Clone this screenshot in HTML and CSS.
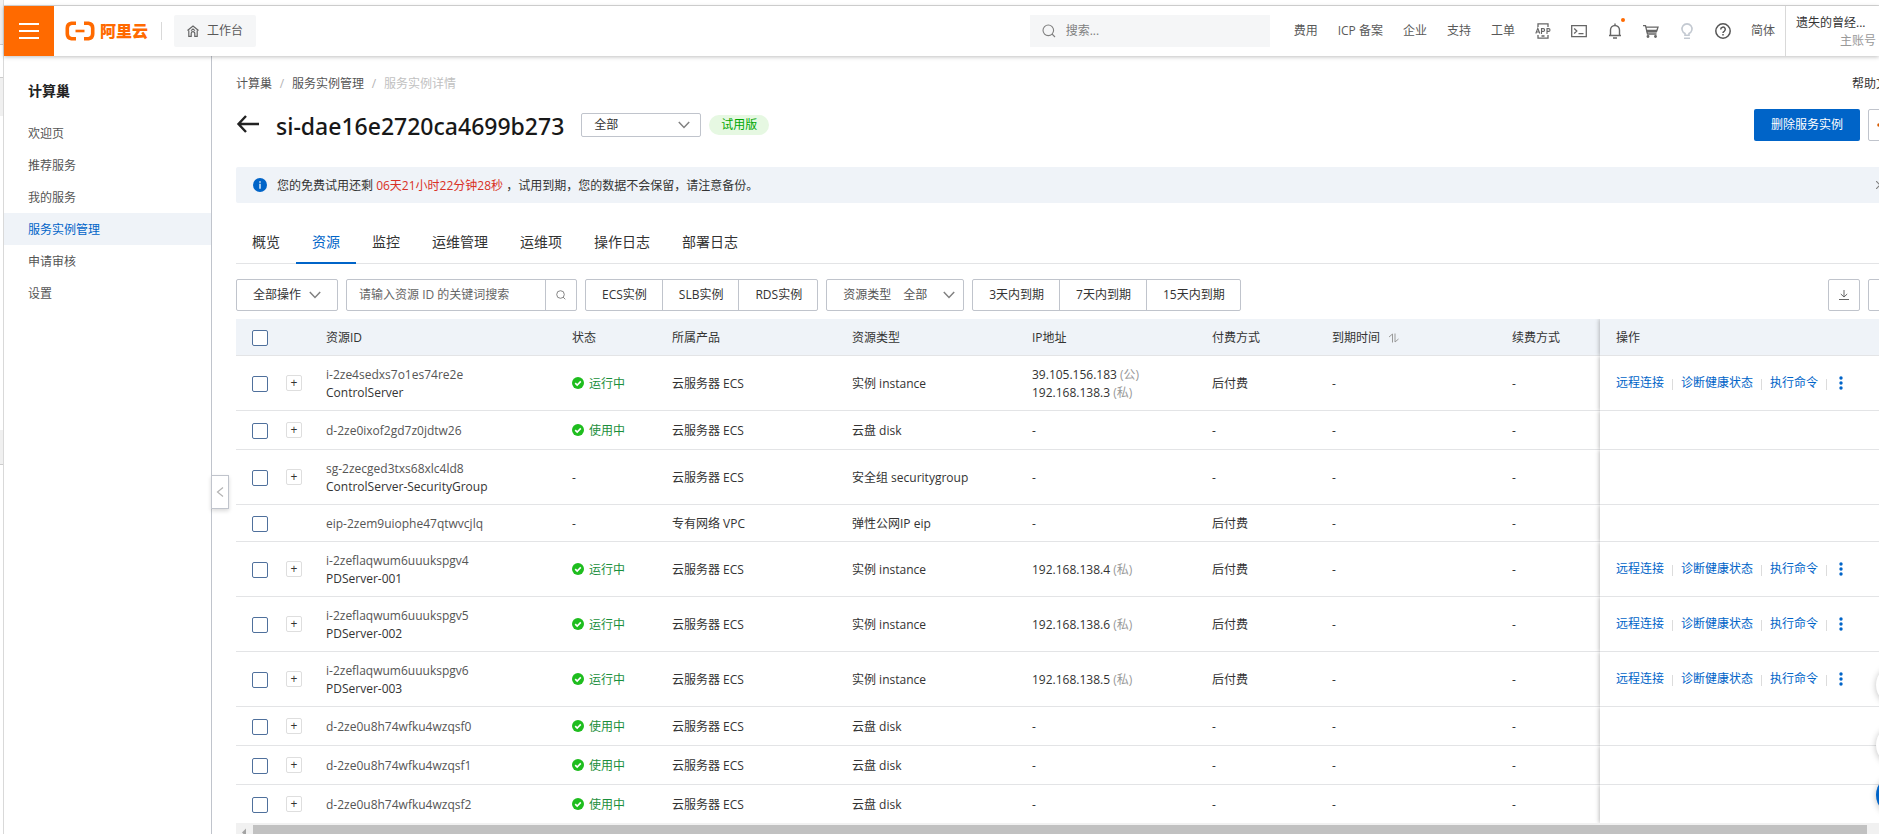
FILE: index.html
```html
<!DOCTYPE html>
<html lang="zh-CN">
<head>
<meta charset="utf-8">
<title>计算巢 - 服务实例详情</title>
<link rel="stylesheet" href="styles.css">
</head>
<body>
<svg class="defs" aria-hidden="true">
  <symbol id="ok" viewBox="0 0 12 12"><circle cx="6" cy="6" r="6" fill="#1ebd1e"/><path d="M3.2 6.1l2 2 3.6-3.7" fill="none" stroke="#fff" stroke-width="1.6"/></symbol>
  <symbol id="down" viewBox="0 0 12 8"><path d="M.8 1l5.2 5.4L11.2 1" fill="none" stroke="#808080" stroke-width="1.5"/></symbol>
  <symbol id="more" viewBox="0 0 4 14"><circle cx="2" cy="2" r="1.7" fill="#0064c8"/><circle cx="2" cy="7" r="1.7" fill="#0064c8"/><circle cx="2" cy="12" r="1.7" fill="#0064c8"/></symbol>
  <symbol id="lens" viewBox="0 0 14 14"><circle cx="6.3" cy="6.3" r="5.3" fill="none" stroke="currentColor" stroke-width="1.1"/><path d="M10 10l3 3" stroke="currentColor" stroke-width="1.1"/></symbol>
</svg>
<div class="page">
  <div class="edge"><i class="e1"></i><i class="e2"></i><i class="e3"></i><i class="e4"></i></div>
  <div class="app">
    <header class="top">
      <button class="burger" aria-label="菜单"><span></span><span></span><span></span></button>
      <a class="logo" href="#">
        <svg width="30" height="20" viewBox="0 0 30 20" fill="none" stroke="#ff6a00"><path d="M11 2.3H6.500Q2.300 3 2.300 7v6q0 4 4.200 4.700H11" stroke-width="3.600"/><path d="M19 2.300h4.500Q27.700 3 27.700 7v6q0 4-4.200 4.700H19" stroke-width="3.600"/><path d="M10.500 10h9" stroke-width="2.600"/></svg>
        <span>阿里云</span>
      </a>
      <i class="bar"></i>
      <a class="bench" href="#">
        <svg width="12" height="12" viewBox="0 0 12 12" fill="none" stroke="#666" stroke-width="1.2"><path d="M.5 5.500L6 1l5.500 4.500M1.800 5.500v5.800h2.400V8.500a1.800 1.800 0 013.600 0v2.800h2.400V5.500M4 5.600l2-1.600 2 1.600"/></svg>
        工作台
      </a>
      <label class="find"><svg width="14" height="14" class="lens"><use href="#lens"/></svg><input type="text" placeholder="搜索..." aria-label="搜索"></label>
      <nav class="links">
        <a href="#">费用</a><a href="#">ICP 备案</a><a href="#">企业</a><a href="#">支持</a><a href="#">工单</a>
        <a href="#" aria-label="App"><svg width="16" height="16" viewBox="0 0 16 16" fill="none" stroke="#666" stroke-width="1.300"><path d="M3 4V.8h10V4M3 12v3.200h10V12M6.500 13h3"/><path d="M.8 10.500L2.800 5.300l2 5.200M1.500 9h2.700M6.500 11V5.600h1.800q1.300 0 1.300 1.400T8.300 8.400H6.500M12 11V5.600h1.600q1.400 0 1.400 1.400t-1.400 1.400H12" stroke-width="1.100"/></svg></a>
        <a href="#" aria-label="CloudShell"><svg width="16" height="16" viewBox="0 0 16 16" fill="none" stroke="#666" stroke-width="1.300"><path d="M.7 2.700h14.600v11H.7zM3.200 5.500L5.800 8 3.200 10.500M7.500 10.700h5"/></svg></a>
        <a class="bell" href="#" aria-label="消息"><svg width="16" height="16" viewBox="0 0 16 16" fill="none" stroke="#666" stroke-width="1.400"><path d="M2 12.500h12M3.500 12.500V7a4.500 4.500 0 019 0v5.500M8 2.500V.5M6 15h4"/></svg></a>
        <a href="#" aria-label="购物车"><svg width="16" height="16" viewBox="0 0 16 16" fill="none" stroke="#666" stroke-width="1.300"><path d="M0 2.700h2.500l2 8.300h9M3 4.200h12l-1.500 4.300H4"/><path d="M4 7.500h9.500l-.5 1.300H4.300z" fill="#666"/><circle cx="5" cy="13.500" r=".8" fill="#666"/><circle cx="12.500" cy="13.500" r=".8" fill="#666"/></svg></a>
        <a href="#" aria-label="提示"><svg width="16" height="16" viewBox="0 0 16 16" fill="none" stroke="#c3c9d1" stroke-width="1.600"><path d="M6 12.300V10.500a5 5 0 114 0v1.800zM5 15.200h6"/></svg></a>
        <a href="#" aria-label="帮助"><svg width="16" height="16" viewBox="0 0 16 16" fill="none" stroke="#555" stroke-width="1.500"><circle cx="8" cy="8" r="7.200"/><path d="M5.700 6.500a2.300 2.300 0 113.500 1.900q-1.200.6-1.200 1.600M8 11v1.500"/></svg></a>
        <a href="#">简体</a>
      </nav>
      <div class="account"><span class="who">遗失的曾经...</span><span class="role">主账号</span></div>
    </header>
    <div class="body">
      <aside class="side">
        <h2>计算巢</h2>
        <nav><a href="#">欢迎页</a><a href="#">推荐服务</a><a href="#">我的服务</a><a class="on" href="#">服务实例管理</a><a href="#">申请审核</a><a href="#">设置</a></nav>
        <button class="fold" aria-label="收起"><svg width="8" height="12" viewBox="0 0 8 12" fill="none" stroke="#b3b3b3" stroke-width="1.200"><path d="M7 1.500L1.500 6 7 10.500"/></svg></button>
      </aside>
      <main class="main">
        <div class="crumbs"><a href="#">计算巢</a><i>/</i><a href="#">服务实例管理</a><i>/</i><span>服务实例详情</span><a class="help" href="#">帮助文档</a></div>
        <div class="title">
          <a class="back" href="#" aria-label="返回"><svg width="24" height="18" viewBox="0 0 24 18" fill="none" stroke="#222" stroke-width="2.400"><path d="M10 1L2.500 9l7.500 8M2.500 9H23"/></svg></a>
          <h1>si-dae16e2720ca4699b273</h1>
          <span class="pick"><select aria-label="范围"><option>全部</option></select><svg width="12" height="8"><use href="#down"/></svg></span>
          <span class="tag">试用版</span>
          <button class="primary">删除服务实例</button>
          <button class="box" aria-label="更多操作"><svg width="14" height="4" viewBox="0 0 14 4" fill="#d95b00"><circle cx="2" cy="2" r="1.800"/><circle cx="7" cy="2" r="1.800"/><circle cx="12" cy="2" r="1.800"/></svg></button>
        </div>
        <div class="alert">
          <svg width="14" height="14" viewBox="0 0 14 14"><circle cx="7" cy="7" r="7" fill="#0064c8"/><path d="M7 3.200v1.500M7 5.700v5" stroke="#fff" stroke-width="1.300"/></svg>
          <p>您的免费试用还剩 <em>06天21小时22分钟28秒</em> ，试用到期，您的数据不会保留，请注意备份。</p>
          <button class="close" aria-label="关闭"><svg width="8" height="8" viewBox="0 0 8 8" stroke="#808080" stroke-width="1.200"><path d="M0 0l8 8M8 0L0 8"/></svg></button>
        </div>
        <nav class="tabs"><a href="#">概览</a><a class="on" href="#">资源</a><a href="#">监控</a><a href="#">运维管理</a><a href="#">运维项</a><a href="#">操作日志</a><a href="#">部署日志</a></nav>
        <div class="tools">
          <button class="btn drop">全部操作<svg width="12" height="8"><use href="#down"/></svg></button>
          <div class="query"><input type="text" placeholder="请输入资源 ID 的关键词搜索" aria-label="资源 ID"><button aria-label="搜索"><svg width="10" height="10"><use href="#lens"/></svg></button></div>
          <div class="group"><button>ECS实例</button><button>SLB实例</button><button>RDS实例</button></div>
          <label class="kind">资源类型<select><option>全部</option></select><svg width="12" height="8"><use href="#down"/></svg></label>
          <div class="group"><button>3天内到期</button><button>7天内到期</button><button>15天内到期</button></div>
          <button class="box right" aria-label="下载"><svg width="10" height="10" viewBox="0 0 10 10" fill="none" stroke="#666"><path d="M5 0v7M1.800 4L5 7l3.200-3M0 9.500h10"/></svg></button>
          <button class="box" aria-label="设置"></button>
        </div>
        <table>
          <colgroup><col class="c-check"><col class="c-plus"><col class="c-id"><col class="c-state"><col class="c-w"><col class="c-w"><col class="c-w"><col class="c-pay"><col class="c-w"><col class="c-renew"><col></colgroup>
          <thead><tr><th><input type="checkbox" aria-label="全选"></th><th></th><th>资源ID</th><th>状态</th><th>所属产品</th><th>资源类型</th><th>IP地址</th><th>付费方式</th><th>到期时间<svg class="sort" width="10" height="10" viewBox="0 0 10 10" fill="none" stroke="#999"><path d="M0 4l3.500-3v8.500M6 .5V9l3.500-3"/></svg></th><th>续费方式</th><th class="act">操作</th></tr></thead>
          <tbody>
            <tr><td><input type="checkbox" aria-label="选择"></td><td><button class="plus">+</button></td><td><a href="#">i-2ze4sedxs7o1es74re2e</a><br>ControlServer</td><td class="st"><svg width="12" height="12"><use href="#ok"/></svg>运行中</td><td>云服务器 ECS</td><td>实例 instance</td><td>39.105.156.183 <small>(公)</small><br>192.168.138.3 <small>(私)</small></td><td>后付费</td><td>-</td><td>-</td><td class="act"><div><a href="#">远程连接</a><a href="#">诊断健康状态</a><a href="#">执行命令</a><button aria-label="更多"><svg width="4" height="14"><use href="#more"/></svg></button></div></td></tr>
            <tr><td><input type="checkbox" aria-label="选择"></td><td><button class="plus">+</button></td><td><a href="#">d-2ze0ixof2gd7z0jdtw26</a></td><td class="st"><svg width="12" height="12"><use href="#ok"/></svg>使用中</td><td>云服务器 ECS</td><td>云盘 disk</td><td>-</td><td>-</td><td>-</td><td>-</td><td class="act"></td></tr>
            <tr><td><input type="checkbox" aria-label="选择"></td><td><button class="plus">+</button></td><td><a href="#">sg-2zecged3txs68xlc4ld8</a><br>ControlServer-SecurityGroup</td><td>-</td><td>云服务器 ECS</td><td>安全组 securitygroup</td><td>-</td><td>-</td><td>-</td><td>-</td><td class="act"></td></tr>
            <tr><td><input type="checkbox" aria-label="选择"></td><td></td><td><a href="#">eip-2zem9uiophe47qtwvcjlq</a></td><td>-</td><td>专有网络 VPC</td><td>弹性公网IP eip</td><td>-</td><td>后付费</td><td>-</td><td>-</td><td class="act"></td></tr>
            <tr><td><input type="checkbox" aria-label="选择"></td><td><button class="plus">+</button></td><td><a href="#">i-2zeflaqwum6uuukspgv4</a><br>PDServer-001</td><td class="st"><svg width="12" height="12"><use href="#ok"/></svg>运行中</td><td>云服务器 ECS</td><td>实例 instance</td><td>192.168.138.4 <small>(私)</small></td><td>后付费</td><td>-</td><td>-</td><td class="act"><div><a href="#">远程连接</a><a href="#">诊断健康状态</a><a href="#">执行命令</a><button aria-label="更多"><svg width="4" height="14"><use href="#more"/></svg></button></div></td></tr>
            <tr><td><input type="checkbox" aria-label="选择"></td><td><button class="plus">+</button></td><td><a href="#">i-2zeflaqwum6uuukspgv5</a><br>PDServer-002</td><td class="st"><svg width="12" height="12"><use href="#ok"/></svg>运行中</td><td>云服务器 ECS</td><td>实例 instance</td><td>192.168.138.6 <small>(私)</small></td><td>后付费</td><td>-</td><td>-</td><td class="act"><div><a href="#">远程连接</a><a href="#">诊断健康状态</a><a href="#">执行命令</a><button aria-label="更多"><svg width="4" height="14"><use href="#more"/></svg></button></div></td></tr>
            <tr><td><input type="checkbox" aria-label="选择"></td><td><button class="plus">+</button></td><td><a href="#">i-2zeflaqwum6uuukspgv6</a><br>PDServer-003</td><td class="st"><svg width="12" height="12"><use href="#ok"/></svg>运行中</td><td>云服务器 ECS</td><td>实例 instance</td><td>192.168.138.5 <small>(私)</small></td><td>后付费</td><td>-</td><td>-</td><td class="act"><div><a href="#">远程连接</a><a href="#">诊断健康状态</a><a href="#">执行命令</a><button aria-label="更多"><svg width="4" height="14"><use href="#more"/></svg></button></div></td></tr>
            <tr><td><input type="checkbox" aria-label="选择"></td><td><button class="plus">+</button></td><td><a href="#">d-2ze0u8h74wfku4wzqsf0</a></td><td class="st"><svg width="12" height="12"><use href="#ok"/></svg>使用中</td><td>云服务器 ECS</td><td>云盘 disk</td><td>-</td><td>-</td><td>-</td><td>-</td><td class="act"></td></tr>
            <tr><td><input type="checkbox" aria-label="选择"></td><td><button class="plus">+</button></td><td><a href="#">d-2ze0u8h74wfku4wzqsf1</a></td><td class="st"><svg width="12" height="12"><use href="#ok"/></svg>使用中</td><td>云服务器 ECS</td><td>云盘 disk</td><td>-</td><td>-</td><td>-</td><td>-</td><td class="act"></td></tr>
            <tr><td><input type="checkbox" aria-label="选择"></td><td><button class="plus">+</button></td><td><a href="#">d-2ze0u8h74wfku4wzqsf2</a></td><td class="st"><svg width="12" height="12"><use href="#ok"/></svg>使用中</td><td>云服务器 ECS</td><td>云盘 disk</td><td>-</td><td>-</td><td>-</td><td>-</td><td class="act"></td></tr>
          </tbody>
        </table>
        <div class="scroll"><svg width="17" height="15" viewBox="0 0 17 15"><path d="M10 3.500v8L6 7.500z" fill="#a3a3a3"/></svg><i></i></div>
      </main>
    </div>
  </div>
  <div class="float"><i></i><i></i><i class="blue"></i></div>
</div>
</body>
</html>
```

FILE: styles.css
```css
* { box-sizing: border-box; }
body {
  margin: 0;
  font: 12px/18px "Open Sans", "Noto Sans CJK SC", sans-serif;
  color: #333;
  background: #fff;
}
a { color: inherit; text-decoration: none; }
button, input, select { font: inherit; color: inherit; margin: 0; }
button { cursor: pointer; padding: 0; background: none; border: 0; }
i, em { font-style: normal; }
svg { flex: none; display: block; }
h1, h2, p { margin: 0; }
.defs { position: absolute; width: 0; height: 0; }
.page { display: flex; height: 100vh; overflow: hidden; }

/* sliver of the neighbouring pane */
.edge { flex: none; width: 4px; border-right: 1px solid #d9d9d9; display: flex; flex-direction: column; }
.edge .e1 { height: 45px; background: #f0f0f0; border-bottom: 1px solid #ccc; }
.edge .e2 { height: 33px; border-bottom: 1px solid #ccc; }
.edge .e3 { height: 38px; background: #f0f0f0; }
.edge .e4 { height: 35px; margin-top: 314px; background: #f0f0f0; border-bottom: 1px solid #ccc; }

.app { flex: 1; min-width: 0; display: flex; flex-direction: column; margin-top: 5px; border-top: 1px solid #d9d9d9; }

/* top bar */
.top { position: relative; z-index: 2; flex: none; display: flex; align-items: center; height: 50px; background: #fff; box-shadow: 0 1px 4px rgba(0, 0, 0, .25); color: #595959; }
.burger { width: 50px; height: 50px; background: #ff6a00; display: flex; flex-direction: column; align-items: center; justify-content: center; gap: 5px; }
.burger span { width: 20px; height: 2px; background: #fff; }
.logo { display: flex; align-items: center; gap: 5px; margin-left: 11px; color: #ff6a00; font-size: 16px; font-weight: 900; }
.bar { width: 1px; height: 18px; margin: 0 12px 0 13px; background: #d9d9d9; }
.bench { display: flex; align-items: center; gap: 8px; height: 32px; padding: 0 13px; background: #f5f6f7; border-radius: 2px; }
.find { display: flex; align-items: center; gap: 10px; width: 240px; height: 32px; margin-left: auto; padding: 0 12px; background: #f5f6f7; }
.find input { flex: 1; min-width: 0; border: 0; padding: 0; background: none; outline: 0; }
.find input::placeholder { color: #808080; opacity: 1; }
.lens { color: #808080; }
.links { display: flex; align-items: center; gap: 20px; padding: 0 10px 0 24px; white-space: nowrap; }
.bell { position: relative; }
.bell::after { content: ""; position: absolute; top: -5px; right: -2px; width: 4px; height: 4px; border-radius: 50%; background: #ff6a00; }
.account { display: flex; flex-direction: column; width: 94px; height: 50px; padding: 8px 3px 0 10px; border-left: 1px solid #d9d9d9; white-space: nowrap; }
.who { color: #333; }
.role { align-self: flex-end; color: #999; }

.body { flex: 1; min-height: 0; display: flex; }

/* side navigation */
.side { position: relative; flex: none; width: 208px; padding-top: 24px; border-right: 1px solid #c0c4cc; }
.side h2 { padding-left: 24px; font-size: 14px; line-height: 22px; font-weight: 600; color: #222; }
.side nav { margin-top: 15px; }
.side nav a { display: block; padding: 2px 0 0 24px; line-height: 30px; color: #555; }
.side nav .on { background: #eff3f8; color: #0064c8; }
.fold { position: absolute; z-index: 1; top: 419px; left: 207px; width: 18px; height: 34px; display: flex; align-items: center; justify-content: center; background: #fff; border: 1px solid #c0c4cc; box-shadow: 0 2px 4px rgba(0, 0, 0, .15); }

/* content */
.main { flex: 1; min-width: 0; margin-right: -21px; padding: 19px 0 0 24px; }
.crumbs { display: flex; color: #555; }
.crumbs i { width: 20px; text-align: center; color: #b3b3b3; }
.crumbs span { color: #c1c1c1; }
.crumbs .help { margin-left: auto; color: #333; }
.title { display: flex; align-items: center; height: 32px; margin-top: 16px; }
.back { padding-bottom: 3px; }
.title h1 { margin: 0 17px 0 16px; padding-top: 2px; font: 500 23px/30px "Noto Sans", sans-serif; color: #181818; }
.pick { position: relative; width: 120px; height: 24px; }
.pick select { width: 100%; height: 24px; padding: 0 12px; appearance: none; background: #fff; border: 1px solid #c0c4cc; border-radius: 2px; }
.pick svg { position: absolute; right: 11px; top: 8px; pointer-events: none; }
.tag { margin-left: 8px; padding: 0 12px; line-height: 20px; border-radius: 10px; background: #e6f8e2; color: #00a700; }
.primary { margin-left: auto; margin-right: 8px; height: 32px; padding: 0 17px; border-radius: 2px; background: #0064c8; color: #fff; }
.box { flex: none; width: 32px; height: 32px; display: flex; align-items: center; justify-content: center; background: #fff; border: 1px solid #c0c4cc; border-radius: 2px; }
.alert { display: flex; align-items: center; gap: 10px; height: 36px; margin-top: 26px; padding: 0 16px 0 17px; background: #eff3f8; border-radius: 2px; }
.alert p { padding-top: 2px; }
.alert em { color: #d93026; }
.close { margin-left: auto; }

.tabs { display: flex; margin-top: 18px; border-bottom: 1px solid #e3e4e6; font-size: 14px; }
.tabs a { padding: 11px 16px 10px; line-height: 20px; margin-bottom: -1px; border-bottom: 2px solid transparent; }
.tabs .on { color: #0064c8; border-color: #0064c8; }

.tools { display: flex; gap: 8px; margin: 15px 0 8px; white-space: nowrap; }
.btn, .query, .group, .kind { height: 32px; background: #fff; border: 1px solid #c0c4cc; border-radius: 2px; display: flex; align-items: center; }
.drop { gap: 8px; padding: 0 16px; }
.query { width: 231px; color: #666; }
.query input { flex: 1; min-width: 0; padding: 0 12px; border: 0; background: none; outline: 0; }
.query input::placeholder { color: #666; opacity: 1; }
.query button { width: 31px; height: 30px; border-left: 1px solid #c0c4cc; display: flex; align-items: center; justify-content: center; }
.group button { height: 30px; padding: 0 15px 0 16px; }
.group button + button { border-left: 1px solid #c0c4cc; }
.kind { padding: 0 8px 0 16px; color: #555; }
.kind select { appearance: none; width: 40px; margin-left: 12px; padding: 0; border: 0; background: none; }
.right { margin-left: auto; }

/* resource table */
table { width: 100%; table-layout: fixed; border-collapse: separate; border-spacing: 0; }
.c-check { width: 50px; }
.c-plus { width: 24px; }
.c-id { width: 246px; }
.c-state { width: 100px; }
.c-w { width: 180px; }
.c-pay { width: 120px; }
.c-renew { width: 104px; }
th, td { padding: 10px 0 8px 16px; border-bottom: 1px solid #e3e4e6; text-align: left; font-weight: 400; white-space: nowrap; }
th { background: #eff3f8; }
th:nth-child(2), td:nth-child(2) { padding-left: 0; }
tbody tr:last-child td { border-bottom: 0; }
td a { color: #555; }
small { font-size: 12px; color: #999; }
table input { appearance: none; display: block; width: 16px; height: 16px; border: 1px solid #4f709c; border-radius: 2px; background: #fff; }
.plus { display: flex; align-items: center; justify-content: center; width: 16px; height: 16px; margin: 1px 0 3px; border: 1px solid #dedede; border-radius: 2px; }
.st { color: #1a8f3c; }
.st svg, .sort { display: inline-block; }
.st svg { margin-right: 5px; vertical-align: -1px; }
.sort { margin-left: 9px; vertical-align: -1px; }
.act { background: #fff; box-shadow: -1px 0 4px rgba(0, 0, 0, .25); clip-path: inset(0 0 0 -8px); }
td.act { padding-top: 9px; padding-bottom: 9px; }
th.act { background: #eff3f8; }
.act div { display: flex; align-items: center; }
.act a { color: #0064c8; }
.act a + a, .act a + button { margin-left: 8px; padding-left: 9px; background: linear-gradient(#dcdcdc, #dcdcdc) no-repeat 0 5px / 1px 11px; }
.act a + button { padding: 2px 0 2px 13px; }

.scroll { display: flex; height: 17px; padding: 2px 33px 0 0; background: #f1f1f1; }
.scroll i { flex: 1; height: 13px; background: #c1c1c1; }

/* floating helpers, mostly past the right edge */
.float { position: fixed; z-index: 3; right: -37px; top: 665px; display: flex; flex-direction: column; gap: 20px; }
.float i { width: 40px; height: 40px; border-radius: 50%; background: #fff; box-shadow: 0 1px 6px rgba(0, 0, 0, .25); }
.float .blue { margin-top: -10px; background: #0064c8; }
```
